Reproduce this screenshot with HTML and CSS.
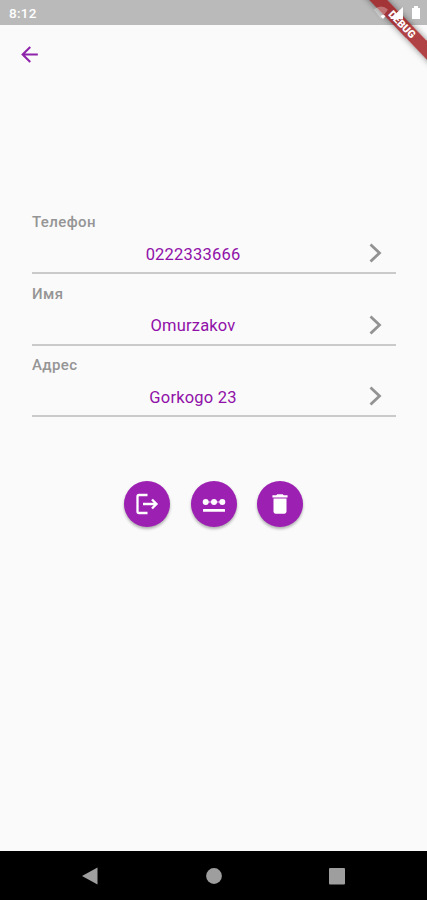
FILE: index.html
```
<!DOCTYPE html>
<html lang="ru">
<head>
    <meta charset="UTF-8">
    <meta name="viewport" content="width=device-width, initial-scale=1.0">
    <title>Профиль</title>
    <link rel="stylesheet" href="styles.css">
</head>
<body>
    <div class="screen">
        <div class="status-bar">
            <span class="time">8:12</span>
            <svg class="status-icons" width="52" height="16" viewBox="0 0 52 16">
                <path d="M2 4.500Q9-1.500 16 4.500L9 14Z" fill="#fff" fill-opacity=".3"/>
                <path d="M11 14L8.500 11Q11 9 13.500 11Z" fill="#fff"/>
                <path d="M18 14L31 2V14Z" fill="#fff"/>
                <path d="M40 3H42V1H46V3H48V14H40Z" fill="#fff"/>
            </svg>
        </div>
        <div class="debug"><span>DEBUG</span></div>

        <header class="app-bar">
            <button class="back">
                <svg width="25" height="25" viewBox="0 0 24 24"><path d="M20 11H7.830l5.590-5.590L12 4l-8 8 8 8 1.410-1.410L7.830 13H20z"/></svg>
            </button>
        </header>

        <main class="profile">
            <div class="field">
                <div class="label">Телефон</div>
                <div class="row">
                    <span class="value">0222333666</span>
                    <svg class="chevron" viewBox="0 0 13 20"><path d="M1.500 1.500L10.500 10L1.500 18.500"/></svg>
                </div>
            </div>
            <div class="field">
                <div class="label">Имя</div>
                <div class="row">
                    <span class="value">Omurzakov</span>
                    <svg class="chevron" viewBox="0 0 13 20"><path d="M1.500 1.500L10.500 10L1.500 18.500"/></svg>
                </div>
            </div>
            <div class="field">
                <div class="label">Адрес</div>
                <div class="row">
                    <span class="value">Gorkogo 23</span>
                    <svg class="chevron" viewBox="0 0 13 20"><path d="M1.500 1.500L10.500 10L1.500 18.500"/></svg>
                </div>
            </div>
        </main>

        <div class="actions">
            <!-- Logout -->
            <button class="btn">
                <svg width="26" height="26" viewBox="0 0 26 26">
                    <path d="M13.500 4H5Q3.500 4 3.500 5.500V20.500Q3.500 22 5 22H13.500M9 13H22M18 8.500L22.500 13L18 17.500" fill="none" stroke="#fff" stroke-width="2.300"/>
                </svg>
            </button>
            <!-- Password -->
            <button class="btn">
                <svg width="26" height="26" viewBox="0 0 26 26">
                    <circle cx="4.700" cy="11" r="3"/>
                    <circle cx="13" cy="11" r="3"/>
                    <circle cx="21.300" cy="11" r="3"/>
                    <path d="M4 11H22" stroke="#fff" stroke-width=".8"/>
                    <rect x="2" y="18" width="22" height="2.700" rx=".5"/>
                </svg>
            </button>
            <!-- Delete -->
            <button class="btn">
                <svg width="26" height="26" viewBox="0 0 24 24"><path d="M6 19c0 1.100.9 2 2 2h8c1.100 0 2-.9 2-2V7H6v12zM19 4h-3.500l-1-1h-5l-1 1H5v2h14V4z"/></svg>
            </button>
        </div>

        <nav class="nav-bar">
            <svg width="16" height="18" viewBox="0 0 16 18"><path d="M0 9L15.500 0.500V17.500Z"/></svg>
            <svg width="16" height="18" viewBox="0 0 16 18"><circle cx="8" cy="9" r="7.900"/></svg>
            <svg width="16" height="18" viewBox="0 0 16 18"><rect y="1" width="16" height="16.500" rx="1"/></svg>
        </nav>
    </div>
</body>
</html>
```

FILE: styles.css
```
* {
    box-sizing: border-box;
}

body {
    margin: 0;
    background: #fafafa;
    font-family: Roboto, sans-serif;
}

.screen {
    position: relative;
    display: flex;
    flex-direction: column;
    height: 900px;
    overflow: hidden;
}

button {
    border: none;
    padding: 0;
    cursor: pointer;
}

svg {
    display: block;
}

.status-bar {
    display: flex;
    align-items: center;
    justify-content: space-between;
    height: 25px;
    padding: 1px 3px 0 9px;
    background: #bababa;
}

.time {
    color: #fff;
    font-size: 13.5px;
    font-weight: 500;
    letter-spacing: 0.3px;
}

/* Corner ribbon */
.debug {
    position: absolute;
    top: 18px;
    right: -27px;
    width: 104px;
    height: 13px;
    transform: rotate(46deg);
    background: rgba(158, 20, 24, 0.8);
    box-shadow: 0 0 6px rgba(0, 0, 0, 0.45);
    color: #fff;
    font-size: 10.5px;
    font-weight: 900;
    line-height: 13px;
    text-align: center;
}

.status-icons {
    position: relative;
    z-index: 1;
}

.app-bar {
    display: flex;
    align-items: center;
    height: 58px;
    padding-left: 17px;
}

.back {
    background: none;
    fill: #8e24aa;
}

.profile {
    margin: 119.5px 31px 0 32px;
}

.field {
    height: 71.5px;
    padding-top: 10.5px;
    border-bottom: 2px solid #cacaca;
}

.label {
    height: 19px;
    color: #959595;
    font-size: 15px;
    font-weight: 500;
    line-height: 19px;
    letter-spacing: 0.4px;
}

.row {
    display: flex;
    align-items: center;
    height: 42px;
    padding-right: 14px;
}

.value {
    flex: 1;
    padding: 2px 15px 0 0;
    color: #9010a8;
    font-size: 16.5px;
    letter-spacing: 0.2px;
    text-align: center;
}

.chevron {
    width: 13px;
    height: 20px;
    fill: none;
    stroke: #939393;
    stroke-width: 2.8px;
}

.actions {
    display: flex;
    justify-content: center;
    gap: 20.5px;
    margin-top: 63.5px;
}

.btn {
    display: flex;
    align-items: center;
    justify-content: center;
    width: 46px;
    height: 46px;
    border-radius: 50%;
    background: #9c20b2;
    box-shadow: 0 2px 3px rgba(0, 0, 0, 0.3);
    fill: #fff;
}

.nav-bar {
    display: flex;
    align-items: center;
    justify-content: space-between;
    height: 49px;
    margin-top: auto;
    padding: 0 82px 0 82px;
    background: #000;
    fill: #9e9e9e;
}
```
